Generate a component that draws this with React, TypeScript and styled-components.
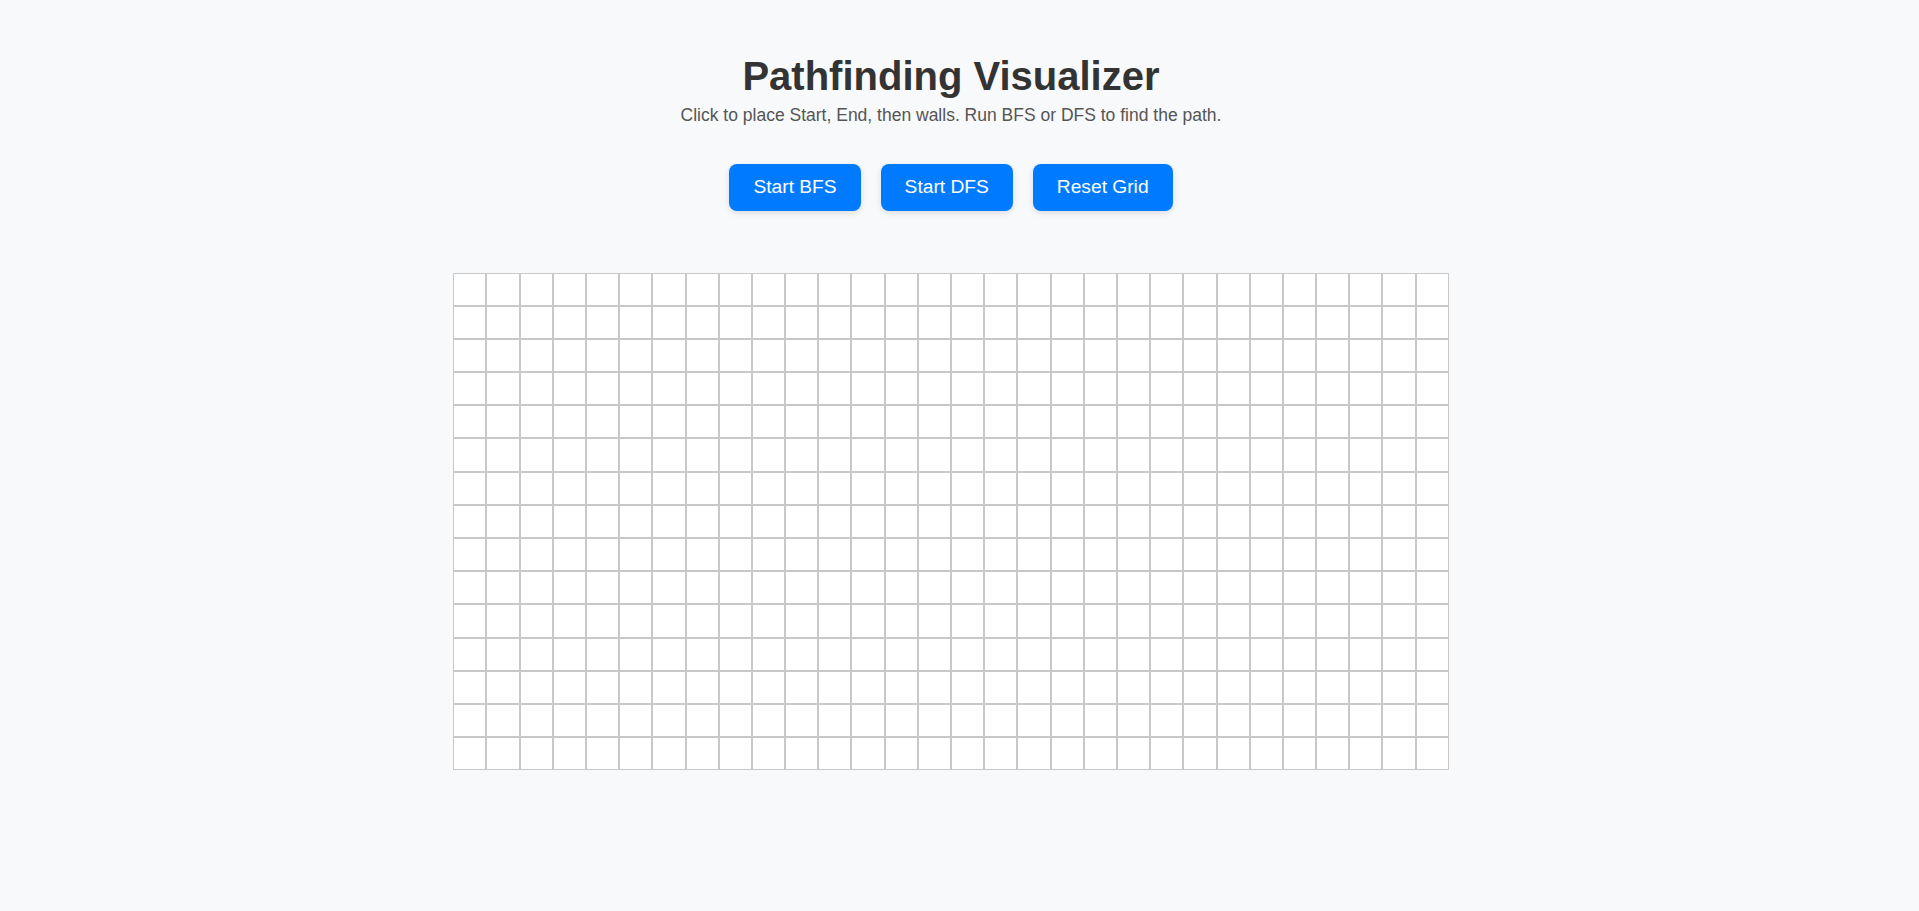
import React, { useState, useCallback } from "react";
import styled, { createGlobalStyle, css } from "styled-components";

const ROWS = 15;
const COLS = 30;

type CellKind = "empty" | "start" | "end" | "wall" | "visited" | "path";

const GlobalStyle = createGlobalStyle`
  html, body {
    margin: 0;
    padding: 0;
    background: #f8f9fa;
  }
  body {
    font-family: "Liberation Sans", Arial, Helvetica, sans-serif;
  }
  * {
    box-sizing: border-box;
  }
`;

const Page = styled.div`
  min-height: 100vh;
  padding: 32px 37px 32px 20px;
  display: flex;
  flex-direction: column;
  align-items: center;
  background: #f8f9fa;
`;

const Title = styled.h1`
  margin: 21.5px 0 6.5px;
  font-size: 40px;
  line-height: normal;
  font-weight: 700;
  color: #333333;
  text-align: center;
`;

const Subtitle = styled.p`
  margin: 0;
  font-size: 17.5px;
  line-height: normal;
  color: #555555;
  text-align: center;
`;

const Controls = styled.div`
  display: flex;
  gap: 20px;
  margin-top: 37.5px;
`;

const Button = styled.button`
  font-family: "Liberation Sans", Arial, Helvetica, sans-serif;
  font-size: 19.2px;
  line-height: normal;
  padding: 12.5px 24px;
  border: none;
  border-radius: 8px;
  background: #007bff;
  color: #ffffff;
  cursor: pointer;
  box-shadow: 0 2px 6px rgba(0, 0, 0, 0.12);
  &:hover {
    background: #0069d9;
  }
`;

const Board = styled.div`
  margin-top: 62px;
  display: grid;
  grid-template-columns: repeat(${COLS}, 33.2px);
  grid-template-rows: repeat(${ROWS}, 33.2px);
`;

const kindColor: Record<CellKind, string> = {
  empty: "#ffffff",
  start: "#28a745",
  end: "#dc3545",
  wall: "#343a40",
  visited: "#9ad0ff",
  path: "#ffd43b",
};

const Cell = styled.div<{ $kind: CellKind }>`
  border: 1px solid #c8c8c8;
  background: ${(p) => kindColor[p.$kind]};
  cursor: pointer;
  ${(p) =>
    p.$kind === "empty" &&
    css`
      &:hover {
        background: #f1f3f5;
      }
    `}
`;

const makeGrid = (): CellKind[][] =>
  Array.from({ length: ROWS }, () => Array.from({ length: COLS }, () => "empty" as CellKind));

type Pos = [number, number];

export default function App() {
  const [grid, setGrid] = useState<CellKind[][]>(makeGrid);
  const [start, setStart] = useState<Pos | null>(null);
  const [end, setEnd] = useState<Pos | null>(null);

  const clearSearch = (g: CellKind[][]) =>
    g.map((row) => row.map((c) => (c === "visited" || c === "path" ? "empty" : c)));

  const handleClick = (r: number, c: number) => {
    setGrid((prev) => {
      const g = clearSearch(prev);
      if (!start) {
        g[r][c] = "start";
        setStart([r, c]);
      } else if (!end) {
        if (g[r][c] === "start") return g;
        g[r][c] = "end";
        setEnd([r, c]);
      } else if (g[r][c] === "empty") {
        g[r][c] = "wall";
      } else if (g[r][c] === "wall") {
        g[r][c] = "empty";
      }
      return g;
    });
  };

  const run = useCallback(
    (mode: "bfs" | "dfs") => {
      if (!start || !end) return;
      const g = clearSearch(grid);
      const key = (p: Pos) => p[0] * COLS + p[1];
      const prev = new Map<number, number>();
      const seen = new Set<number>([key(start)]);
      const frontier: Pos[] = [start];
      let found = false;
      while (frontier.length) {
        const cur = mode === "bfs" ? frontier.shift()! : frontier.pop()!;
        if (cur[0] === end[0] && cur[1] === end[1]) {
          found = true;
          break;
        }
        if (g[cur[0]][cur[1]] === "empty") g[cur[0]][cur[1]] = "visited";
        const dirs: Pos[] = [
          [1, 0],
          [-1, 0],
          [0, 1],
          [0, -1],
        ];
        for (const [dr, dc] of dirs) {
          const nr = cur[0] + dr;
          const nc = cur[1] + dc;
          if (nr < 0 || nc < 0 || nr >= ROWS || nc >= COLS) continue;
          const k = nr * COLS + nc;
          if (seen.has(k) || g[nr][nc] === "wall") continue;
          seen.add(k);
          prev.set(k, key(cur));
          frontier.push([nr, nc]);
        }
      }
      if (found) {
        let k = prev.get(key(end));
        while (k !== undefined && k !== key(start)) {
          const r = Math.floor(k / COLS);
          const c = k % COLS;
          g[r][c] = "path";
          k = prev.get(k);
        }
      }
      setGrid(g);
    },
    [grid, start, end]
  );

  const reset = () => {
    setGrid(makeGrid());
    setStart(null);
    setEnd(null);
  };

  return (
    <>
      <GlobalStyle />
      <Page>
        <Title>Pathfinding Visualizer</Title>
        <Subtitle>Click to place Start, End, then walls. Run BFS or DFS to find the path.</Subtitle>
        <Controls>
          <Button onClick={() => run("bfs")}>Start BFS</Button>
          <Button onClick={() => run("dfs")}>Start DFS</Button>
          <Button onClick={reset}>Reset Grid</Button>
        </Controls>
        <Board>
          {grid.map((row, r) =>
            row.map((kind, c) => <Cell key={`${r}-${c}`} $kind={kind} onClick={() => handleClick(r, c)} />)
          )}
        </Board>
      </Page>
    </>
  );
}
